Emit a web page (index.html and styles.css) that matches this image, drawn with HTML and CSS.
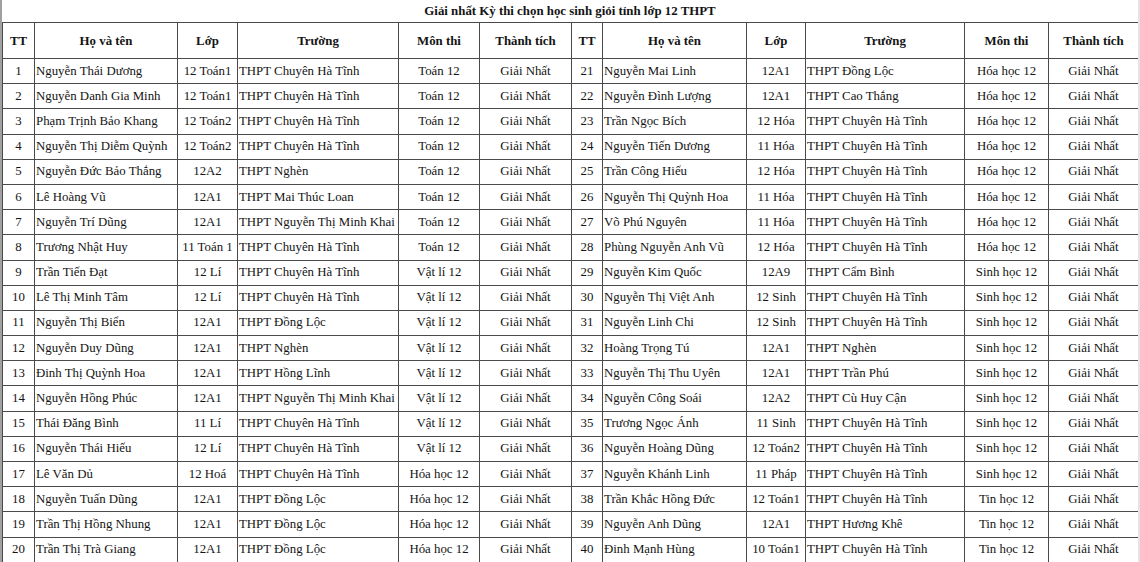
FILE: index.html
```html
<!DOCTYPE html>
<html lang="vi">
<head>
<meta charset="utf-8">
<title>Giải nhất Kỳ thi chọn học sinh giỏi tỉnh lớp 12 THPT</title>
<link rel="stylesheet" href="styles.css">
</head>
<body>
<div class="page">
  <div class="edge-left"></div>
  <div class="sheet">
    <div class="title">Giải nhất Kỳ thi chọn học sinh giỏi tỉnh lớp 12 THPT</div>
    <table class="grid">
      <colgroup>
        <col class="c-tt"><col class="c-name"><col class="c-class"><col class="c-school"><col class="c-subj"><col class="c-prize">
        <col class="c-tt2"><col class="c-name2"><col class="c-class2"><col class="c-school2"><col class="c-subj2"><col class="c-prize2">
      </colgroup>
      <thead>
        <tr>
          <th>TT</th><th>Họ và tên</th><th>Lớp</th><th>Trường</th><th>Môn thi</th><th>Thành tích</th>
          <th>TT</th><th>Họ và tên</th><th>Lớp</th><th>Trường</th><th>Môn thi</th><th>Thành tích</th>
        </tr>
      </thead>
      <tbody>
        <tr><td class="c">1</td><td>Nguyễn Thái Dương</td><td class="c">12 Toán1</td><td>THPT Chuyên Hà Tĩnh</td><td class="c">Toán 12</td><td class="c">Giải Nhất</td><td class="c">21</td><td>Nguyễn Mai Linh</td><td class="c">12A1</td><td>THPT Đồng Lộc</td><td class="c">Hóa học 12</td><td class="c">Giải Nhất</td></tr>
        <tr><td class="c">2</td><td>Nguyễn Danh Gia Minh</td><td class="c">12 Toán1</td><td>THPT Chuyên Hà Tĩnh</td><td class="c">Toán 12</td><td class="c">Giải Nhất</td><td class="c">22</td><td>Nguyễn Đình Lượng</td><td class="c">12A1</td><td>THPT Cao Thắng</td><td class="c">Hóa học 12</td><td class="c">Giải Nhất</td></tr>
        <tr><td class="c">3</td><td>Phạm Trịnh Bảo Khang</td><td class="c">12 Toán2</td><td>THPT Chuyên Hà Tĩnh</td><td class="c">Toán 12</td><td class="c">Giải Nhất</td><td class="c">23</td><td>Trần Ngọc Bích</td><td class="c">12 Hóa</td><td>THPT Chuyên Hà Tĩnh</td><td class="c">Hóa học 12</td><td class="c">Giải Nhất</td></tr>
        <tr><td class="c">4</td><td>Nguyễn Thị Diễm Quỳnh</td><td class="c">12 Toán2</td><td>THPT Chuyên Hà Tĩnh</td><td class="c">Toán 12</td><td class="c">Giải Nhất</td><td class="c">24</td><td>Nguyễn Tiến Dương</td><td class="c">11 Hóa</td><td>THPT Chuyên Hà Tĩnh</td><td class="c">Hóa học 12</td><td class="c">Giải Nhất</td></tr>
        <tr><td class="c">5</td><td>Nguyễn Đức Bảo Thắng</td><td class="c">12A2</td><td>THPT Nghèn</td><td class="c">Toán 12</td><td class="c">Giải Nhất</td><td class="c">25</td><td>Trần Công Hiếu</td><td class="c">12 Hóa</td><td>THPT Chuyên Hà Tĩnh</td><td class="c">Hóa học 12</td><td class="c">Giải Nhất</td></tr>
        <tr><td class="c">6</td><td>Lê Hoàng Vũ</td><td class="c">12A1</td><td>THPT Mai Thúc Loan</td><td class="c">Toán 12</td><td class="c">Giải Nhất</td><td class="c">26</td><td>Nguyễn Thị Quỳnh Hoa</td><td class="c">11 Hóa</td><td>THPT Chuyên Hà Tĩnh</td><td class="c">Hóa học 12</td><td class="c">Giải Nhất</td></tr>
        <tr><td class="c">7</td><td>Nguyễn Trí Dũng</td><td class="c">12A1</td><td>THPT Nguyễn Thị Minh Khai</td><td class="c">Toán 12</td><td class="c">Giải Nhất</td><td class="c">27</td><td>Võ Phú Nguyên</td><td class="c">11 Hóa</td><td>THPT Chuyên Hà Tĩnh</td><td class="c">Hóa học 12</td><td class="c">Giải Nhất</td></tr>
        <tr><td class="c">8</td><td>Trương Nhật Huy</td><td class="c">11 Toán 1</td><td>THPT Chuyên Hà Tĩnh</td><td class="c">Toán 12</td><td class="c">Giải Nhất</td><td class="c">28</td><td>Phùng Nguyễn Anh Vũ</td><td class="c">12 Hóa</td><td>THPT Chuyên Hà Tĩnh</td><td class="c">Hóa học 12</td><td class="c">Giải Nhất</td></tr>
        <tr><td class="c">9</td><td>Trần Tiến Đạt</td><td class="c">12 Lí</td><td>THPT Chuyên Hà Tĩnh</td><td class="c">Vật lí 12</td><td class="c">Giải Nhất</td><td class="c">29</td><td>Nguyễn Kim Quốc</td><td class="c">12A9</td><td>THPT Cẩm Bình</td><td class="c">Sinh học 12</td><td class="c">Giải Nhất</td></tr>
        <tr><td class="c">10</td><td>Lê Thị Minh Tâm</td><td class="c">12 Lí</td><td>THPT Chuyên Hà Tĩnh</td><td class="c">Vật lí 12</td><td class="c">Giải Nhất</td><td class="c">30</td><td>Nguyễn Thị Việt Anh</td><td class="c">12 Sinh</td><td>THPT Chuyên Hà Tĩnh</td><td class="c">Sinh học 12</td><td class="c">Giải Nhất</td></tr>
        <tr><td class="c">11</td><td>Nguyễn Thị Biển</td><td class="c">12A1</td><td>THPT Đồng Lộc</td><td class="c">Vật lí 12</td><td class="c">Giải Nhất</td><td class="c">31</td><td>Nguyễn Linh Chi</td><td class="c">12 Sinh</td><td>THPT Chuyên Hà Tĩnh</td><td class="c">Sinh học 12</td><td class="c">Giải Nhất</td></tr>
        <tr><td class="c">12</td><td>Nguyễn Duy Dũng</td><td class="c">12A1</td><td>THPT Nghèn</td><td class="c">Vật lí 12</td><td class="c">Giải Nhất</td><td class="c">32</td><td>Hoàng Trọng Tú</td><td class="c">12A1</td><td>THPT Nghèn</td><td class="c">Sinh học 12</td><td class="c">Giải Nhất</td></tr>
        <tr><td class="c">13</td><td>Đinh Thị Quỳnh Hoa</td><td class="c">12A1</td><td>THPT Hồng Lĩnh</td><td class="c">Vật lí 12</td><td class="c">Giải Nhất</td><td class="c">33</td><td>Nguyễn Thị Thu Uyên</td><td class="c">12A1</td><td>THPT Trần Phú</td><td class="c">Sinh học 12</td><td class="c">Giải Nhất</td></tr>
        <tr><td class="c">14</td><td>Nguyễn Hồng Phúc</td><td class="c">12A1</td><td>THPT Nguyễn Thị Minh Khai</td><td class="c">Vật lí 12</td><td class="c">Giải Nhất</td><td class="c">34</td><td>Nguyễn Công Soái</td><td class="c">12A2</td><td>THPT Cù Huy Cận</td><td class="c">Sinh học 12</td><td class="c">Giải Nhất</td></tr>
        <tr><td class="c">15</td><td>Thái Đăng Bình</td><td class="c">11 Lí</td><td>THPT Chuyên Hà Tĩnh</td><td class="c">Vật lí 12</td><td class="c">Giải Nhất</td><td class="c">35</td><td>Trương Ngọc Ánh</td><td class="c">11 Sinh</td><td>THPT Chuyên Hà Tĩnh</td><td class="c">Sinh học 12</td><td class="c">Giải Nhất</td></tr>
        <tr><td class="c">16</td><td>Nguyễn Thái Hiếu</td><td class="c">12 Lí</td><td>THPT Chuyên Hà Tĩnh</td><td class="c">Vật lí 12</td><td class="c">Giải Nhất</td><td class="c">36</td><td>Nguyễn Hoàng Dũng</td><td class="c">12 Toán2</td><td>THPT Chuyên Hà Tĩnh</td><td class="c">Sinh học 12</td><td class="c">Giải Nhất</td></tr>
        <tr><td class="c">17</td><td>Lê Văn Dủ</td><td class="c">12 Hoá</td><td>THPT Chuyên Hà Tĩnh</td><td class="c">Hóa học 12</td><td class="c">Giải Nhất</td><td class="c">37</td><td>Nguyễn Khánh Linh</td><td class="c">11 Pháp</td><td>THPT Chuyên Hà Tĩnh</td><td class="c">Sinh học 12</td><td class="c">Giải Nhất</td></tr>
        <tr><td class="c">18</td><td>Nguyễn Tuấn Dũng</td><td class="c">12A1</td><td>THPT Đồng Lộc</td><td class="c">Hóa học 12</td><td class="c">Giải Nhất</td><td class="c">38</td><td>Trần Khắc Hồng Đức</td><td class="c">12 Toán1</td><td>THPT Chuyên Hà Tĩnh</td><td class="c">Tin học 12</td><td class="c">Giải Nhất</td></tr>
        <tr><td class="c">19</td><td>Trần Thị Hồng Nhung</td><td class="c">12A1</td><td>THPT Đồng Lộc</td><td class="c">Hóa học 12</td><td class="c">Giải Nhất</td><td class="c">39</td><td>Nguyễn Anh Dũng</td><td class="c">12A1</td><td>THPT Hương Khê</td><td class="c">Tin học 12</td><td class="c">Giải Nhất</td></tr>
        <tr><td class="c">20</td><td>Trần Thị Trà Giang</td><td class="c">12A1</td><td>THPT Đồng Lộc</td><td class="c">Hóa học 12</td><td class="c">Giải Nhất</td><td class="c">40</td><td>Đinh Mạnh Hùng</td><td class="c">10 Toán1</td><td>THPT Chuyên Hà Tĩnh</td><td class="c">Tin học 12</td><td class="c">Giải Nhất</td></tr>
      </tbody>
    </table>
  </div>
  <div class="edge-right"></div>
</div>
</body>
</html>
```

FILE: styles.css
```css
html, body {
  margin: 0;
  padding: 0;
  background: #ffffff;
}

body {
  font-family: "Liberation Serif", "Times New Roman", serif;
  color: #141414;
  width: 1140px;
  height: 562px;
  overflow: hidden;
}

.page {
  display: flex;
  width: 1140px;
  height: 562px;
}

.edge-left {
  width: 2px;
  flex: none;
  background: #a0a0a0;
}

.sheet {
  width: 1136px;
  flex: none;
}

.edge-right {
  width: 2px;
  flex: none;
  background: #e4e4e4;
}

.title {
  height: 22px;
  line-height: 22px;
  text-align: center;
  font-weight: bold;
  font-size: 12.85px;
}

.grid {
  width: 1136px;
  table-layout: fixed;
  border-collapse: collapse;
  font-size: 12.85px;
}

.grid th,
.grid td {
  border: 1px solid #4a4a4a;
  padding: 0 1px;
  white-space: nowrap;
  overflow: hidden;
  vertical-align: middle;
}

.grid th {
  height: 33px;
  padding-top: 2px;
  font-weight: bold;
  text-align: center;
}

.grid td {
  height: 24.2px;
  text-align: left;
}

.grid td.c {
  text-align: center;
}

.c-tt { width: 32px; }
.c-name { width: 143px; }
.c-class { width: 60px; }
.c-school { width: 161px; }
.c-subj { width: 81px; }
.c-prize { width: 92px; }
.c-tt2 { width: 31px; }
.c-name2 { width: 144px; }
.c-class2 { width: 59px; }
.c-school2 { width: 159px; }
.c-subj2 { width: 84px; }
.c-prize2 { width: 90px; }
```
